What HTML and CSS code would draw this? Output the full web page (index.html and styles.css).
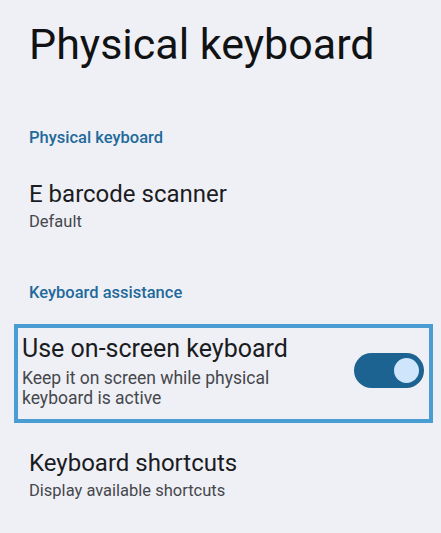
FILE: index.html
```html
<!DOCTYPE html>
<html>
<head>
<meta charset="utf-8">
<link rel="stylesheet" href="styles.css">
</head>
<body>
<div class="page">
  <h1 class="title">Physical keyboard</h1>
  <div class="section-header first">Physical keyboard</div>
  <div class="item">
    <div class="item-title">E barcode scanner</div>
    <div class="item-sub">Default</div>
  </div>
  <div class="section-header second">Keyboard assistance</div>
  <div class="focus-box">
    <div class="toggle-row">
      <div class="texts">
        <div class="item-title big">Use on-screen keyboard</div>
        <div class="item-sub big">Keep it on screen while physical keyboard is active</div>
      </div>
      <div class="switch"><div class="thumb"></div></div>
    </div>
  </div>
  <div class="item last">
    <div class="item-title">Keyboard shortcuts</div>
    <div class="item-sub">Display available shortcuts</div>
  </div>
</div>
</body>
</html>
```
FILE: styles.css
```css
html, body {
  margin: 0;
  padding: 0;
  background: #eff0f5;
}
body {
  font-family: Roboto, "Noto Sans", sans-serif;
  color: #1b1c1f;
  width: 441px;
  height: 533px;
  overflow: hidden;
}
.title {
  margin: 0;
  padding: 16px 0 0 29px;
  font-size: 43px;
  font-weight: 400;
  line-height: 56px;
  color: #111214;
}
.section-header {
  padding-left: 29px;
  font-size: 16.5px;
  font-weight: 500;
  color: #1f6a9b;
  line-height: 20px;
}
.section-header.first {
  margin-top: 56px;
}
.section-header.second {
  margin-top: 51px;
}
.item {
  padding-left: 29px;
  margin-top: 32px;
}
.item-title {
  font-size: 24px;
  line-height: 28px;
  color: #1b1c1f;
}
.item-sub {
  margin-top: 4px;
  font-size: 16.5px;
  line-height: 20px;
  color: #45474c;
}
.item-title.big {
  font-size: 25px;
}
.item-sub.big {
  margin-top: 5px;
  font-size: 17.5px;
}
.focus-box {
  margin: 21px 8px 0 14px;
  border: 4px solid #4a9dd2;
  height: 91px;
}
.toggle-row {
  display: flex;
  align-items: flex-start;
  justify-content: space-between;
  padding: 7px 5px 0 4px;
}
.texts {
  width: 285px;
}
.switch {
  width: 70px;
  height: 35px;
  border-radius: 17.5px;
  background: #1d6391;
  display: flex;
  align-items: center;
  justify-content: flex-end;
  padding-right: 5px;
  box-sizing: border-box;
  margin-top: 18px;
}
.thumb {
  width: 25px;
  height: 25px;
  border-radius: 50%;
  background: #cfe5fb;
}
.item.last {
  margin-top: 26px;
}
```
